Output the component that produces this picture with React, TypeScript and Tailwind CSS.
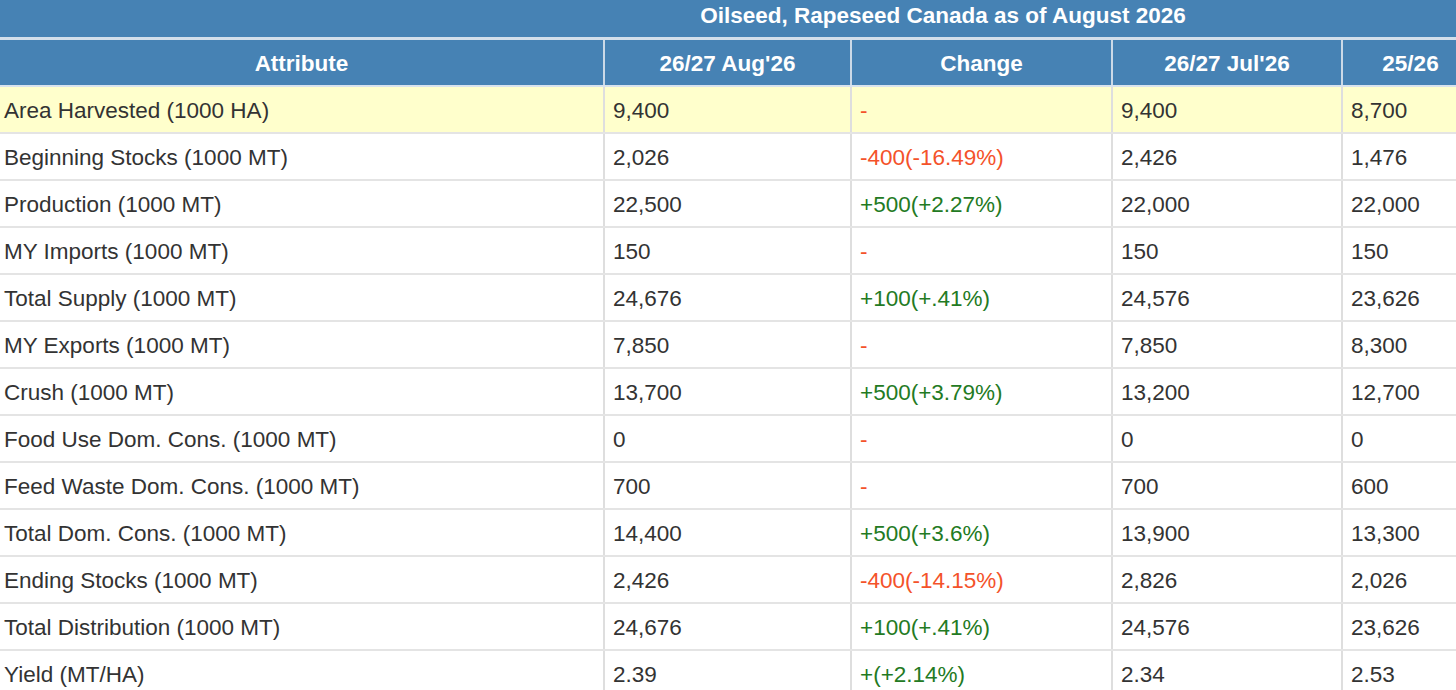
import React from "react";

type Row = {
  attr: string;
  aug: string;
  change: string;
  tone: "red" | "green";
  jul: string;
  prev: string;
  highlight?: boolean;
};

const rows: Row[] = [
  { attr: "Area Harvested (1000 HA)", aug: "9,400", change: "-", tone: "red", jul: "9,400", prev: "8,700", highlight: true },
  { attr: "Beginning Stocks (1000 MT)", aug: "2,026", change: "-400(-16.49%)", tone: "red", jul: "2,426", prev: "1,476" },
  { attr: "Production (1000 MT)", aug: "22,500", change: "+500(+2.27%)", tone: "green", jul: "22,000", prev: "22,000" },
  { attr: "MY Imports (1000 MT)", aug: "150", change: "-", tone: "red", jul: "150", prev: "150" },
  { attr: "Total Supply (1000 MT)", aug: "24,676", change: "+100(+.41%)", tone: "green", jul: "24,576", prev: "23,626" },
  { attr: "MY Exports (1000 MT)", aug: "7,850", change: "-", tone: "red", jul: "7,850", prev: "8,300" },
  { attr: "Crush (1000 MT)", aug: "13,700", change: "+500(+3.79%)", tone: "green", jul: "13,200", prev: "12,700" },
  { attr: "Food Use Dom. Cons. (1000 MT)", aug: "0", change: "-", tone: "red", jul: "0", prev: "0" },
  { attr: "Feed Waste Dom. Cons. (1000 MT)", aug: "700", change: "-", tone: "red", jul: "700", prev: "600" },
  { attr: "Total Dom. Cons. (1000 MT)", aug: "14,400", change: "+500(+3.6%)", tone: "green", jul: "13,900", prev: "13,300" },
  { attr: "Ending Stocks (1000 MT)", aug: "2,426", change: "-400(-14.15%)", tone: "red", jul: "2,826", prev: "2,026" },
  { attr: "Total Distribution (1000 MT)", aug: "24,676", change: "+100(+.41%)", tone: "green", jul: "24,576", prev: "23,626" },
  { attr: "Yield (MT/HA)", aug: "2.39", change: "+(+2.14%)", tone: "green", jul: "2.34", prev: "2.53" },
];

const grid = "grid grid-cols-[605px_247px_261px_230px_137px_203px_203px]";

export default function App() {
  return (
    <div
      className="w-[1456px] h-[690px] overflow-hidden bg-white"
      style={{ fontFamily: '"Liberation Sans", Arial, sans-serif' }}
    >
      <div className="w-[1886px] text-[22.5px] leading-none">
        <div className="h-[40px] pb-[5px] bg-[#4682b4] border-b-[3px] border-b-[#d3dfeb] flex items-center justify-center text-white font-bold">
          Oilseed, Rapeseed Canada as of August 2026
        </div>
        <div className={`${grid} h-[47px] bg-[#4682b4] text-white font-bold border-b-2 border-b-[#d8e3ee]`}>
          {["Attribute", "26/27 Aug'26", "Change", "26/27 Jul'26", "25/26", "", ""].map((h, i) => (
            <div
              key={i}
              className="flex items-center justify-center pt-[3px] border-r-2 border-r-[#cbd9e7]"
            >
              {h}
            </div>
          ))}
        </div>
        {rows.map((r) => (
          <div
            key={r.attr}
            className={`${grid} h-[47px] border-b-2 border-b-[#e4e4e4] text-[#333333] ${
              r.highlight ? "bg-[#ffffcc]" : "bg-white"
            }`}
          >
            <div className="flex items-center pt-[4px] pl-[4px] border-r-2 border-r-[#dedede]">{r.attr}</div>
            <div className="flex items-center pt-[4px] pl-[8px] border-r-2 border-r-[#dedede]">{r.aug}</div>
            <div
              className={`flex items-center pt-[4px] pl-[8px] border-r-2 border-r-[#dedede] ${
                r.tone === "red" ? "text-[#f4522a]" : "text-[#237a23]"
              }`}
            >
              {r.change}
            </div>
            <div className="flex items-center pt-[4px] pl-[8px] border-r-2 border-r-[#dedede]">{r.jul}</div>
            <div className="flex items-center pt-[4px] pl-[8px] border-r-2 border-r-[#dedede]">{r.prev}</div>
            <div className="flex items-center pt-[4px] pl-[8px] border-r-2 border-r-[#dedede]"></div>
            <div className="flex items-center pt-[4px] pl-[8px] border-r-2 border-r-[#dedede]"></div>
          </div>
        ))}
      </div>
    </div>
  );
}
